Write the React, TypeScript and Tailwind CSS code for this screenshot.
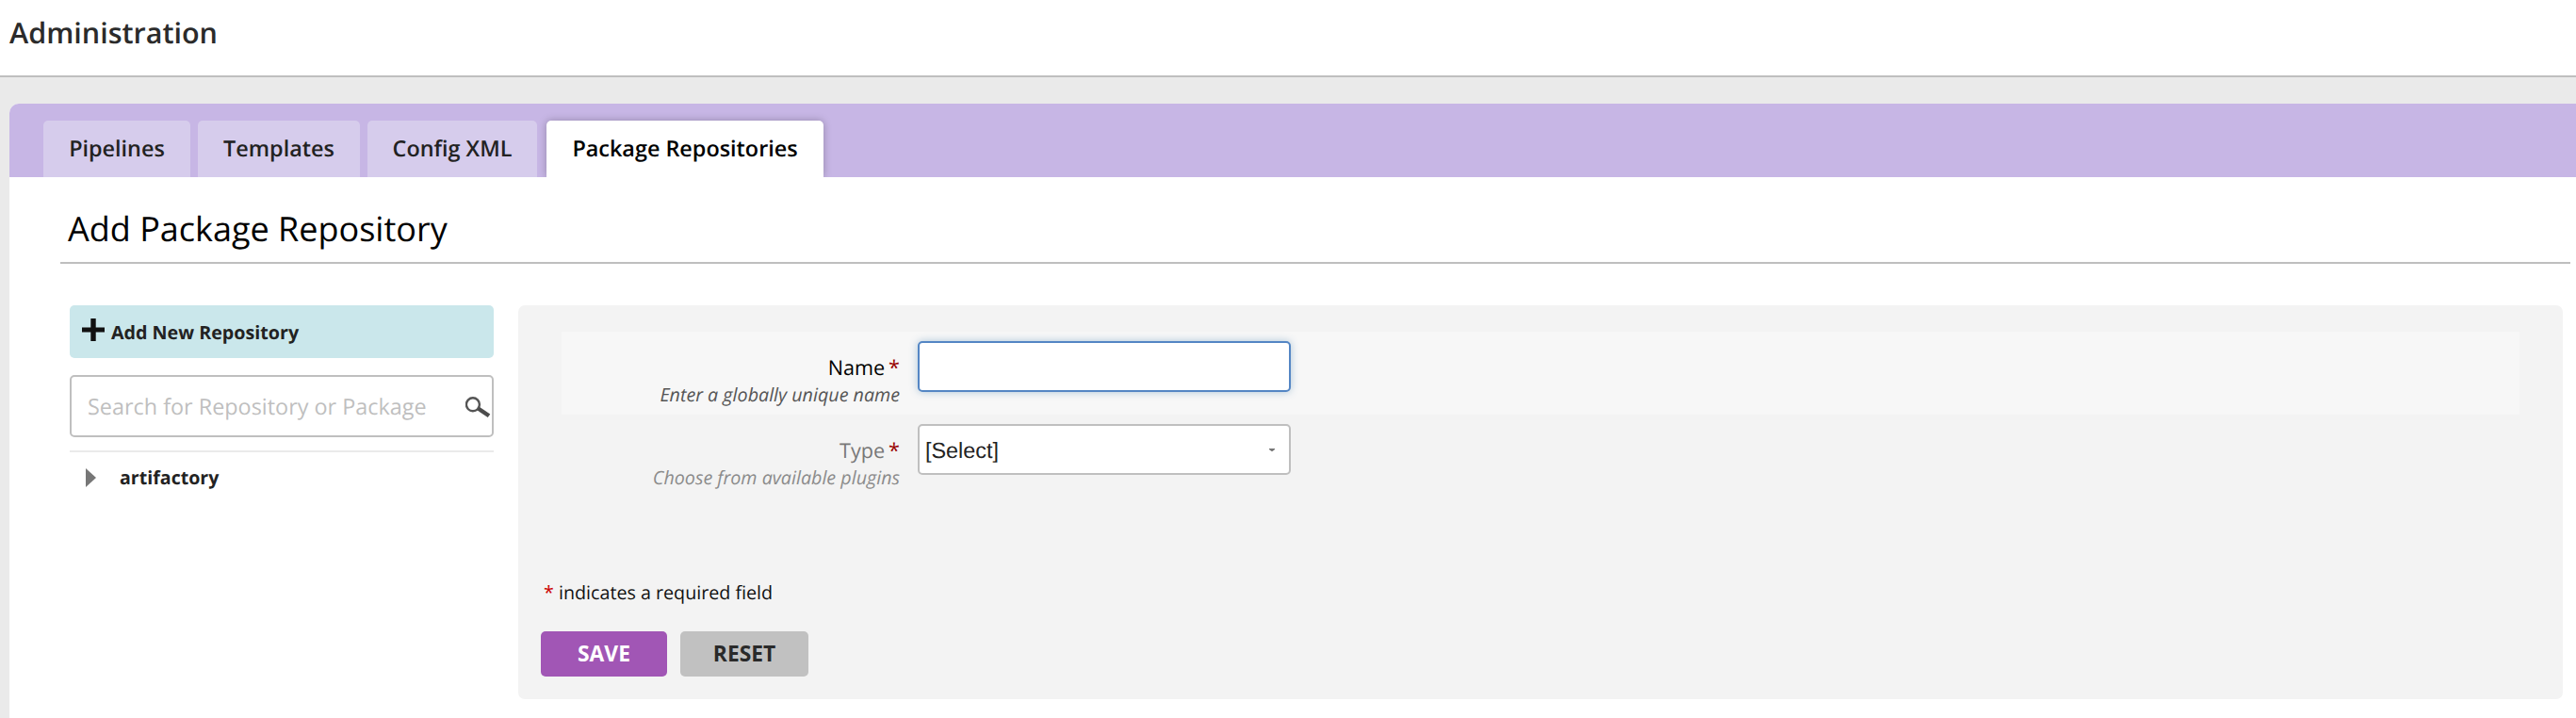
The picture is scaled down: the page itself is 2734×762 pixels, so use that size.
import type { ReactNode } from "react";

function Tab({ label, className }: { label: string; className: string }) {
  return (
    <a className={"flex h-[60px] items-start justify-center rounded-t-[5px] pt-[10px] text-[23.4px] font-semibold leading-[38px] whitespace-nowrap " + className}>
      {label}
    </a>
  );
}

function Field({ label, hint, labelClass, hintClass, rowClass, children }: {
  label: string; hint: string; labelClass: string; hintClass: string; rowClass: string; children: ReactNode;
}) {
  return (
    <div className={"flex h-[88px] pt-[10px] " + rowClass}>
      <div className="mr-[19px] w-[359px] shrink-0 pt-[14px] text-right">
        <div className={"text-[21.6px] leading-[30px] " + labelClass}>
          {label}
          <span className="ml-1 text-[#990000]">*</span>
        </div>
        <div className={"-mt-px text-[19.7px] italic leading-[28px] " + hintClass}>{hint}</div>
      </div>
      {children}
    </div>
  );
}

export default function App() {
  return (
    <div className="flex h-[762px] flex-col overflow-hidden bg-[#eaeaea] font-['Open_Sans',sans-serif] text-[#222] [text-rendering:geometricPrecision]">
      <header className="h-[82px] shrink-0 border-b-2 border-[#bfbfbf] bg-white pl-[10px]">
        <h1 className="text-[30.5px] font-semibold leading-[69px] text-[#2b2b2b]">Administration</h1>
      </header>
      <main className="mt-[28px] ml-[10px] flex grow flex-col overflow-hidden rounded-tl-[10px] bg-white">
        <nav className="flex h-[78px] shrink-0 overflow-hidden bg-[#c7b6e5] pt-[18px] pl-[36px]">
          <Tab label="Pipelines" className="mr-2 w-[156px] bg-[#d6ccec]" />
          <Tab label="Templates" className="mr-2 w-[172px] bg-[#d6ccec]" />
          <Tab label="Config XML" className="mr-[10px] w-[180px] bg-[#d6ccec]" />
          <Tab label="Package Repositories" className="w-[294px] bg-white text-black shadow-[0_0_8px_rgba(0,0,0,0.26)]" />
        </nav>
        <h2 className="mr-[6px] ml-[54px] h-[92px] shrink-0 border-b-2 border-[#bfbfbf] pt-[30px] pl-[8px] text-[36px] leading-[50px] text-black">
          Add Package Repository
        </h2>
        <div className="flex items-start pt-[44px] pr-[14px] pl-[64px]">
          <aside className="mr-[26px] w-[450px] shrink-0">
            <a className="flex h-[56px] rounded-[5px] bg-[#cae7eb] pl-[13px] text-[19.7px] font-bold leading-[58px]">
              <svg width="24" height="24" viewBox="0 0 24 24" className="mt-[14px] mr-[7px]" fill="#111">
                <path d="M9.3 0h5.4v9.6H24v4.8h-9.3V24H9.3v-9.6H0V9.6h9.3z" />
              </svg>
              Add New Repository
            </a>
            <div className="mt-[18px] flex h-[66px] items-start justify-between rounded-[5px] border-2 border-[#bfbfbf] pl-[17px]">
              <span className="text-[23.4px] leading-[63px] text-[#bfbfbf]">Search for Repository or Package</span>
              <svg width="28" height="24" viewBox="0 0 28 24" fill="none" className="mt-[21px]">
                <circle cx="7.9" cy="8.3" r="7" stroke="#555" strokeWidth="2.4" />
                <path d="M13.5 12.5L25 20.3" stroke="#4c4c4c" strokeWidth="4.4" />
              </svg>
            </div>
            <div className="mt-[14px] flex border-t-2 border-[#eaeaea] pt-[13px] pl-[17px] text-[19.6px] font-bold leading-[28px]">
              <svg width="11" height="20" viewBox="0 0 11 20" className="mt-[4px] mr-[25px]">
                <path d="M0 0L11 10L0 20z" fill="#777" />
              </svg>
              artifactory
            </div>
          </aside>
          <section className="h-[418px] grow rounded-[7px] bg-[#f3f3f3] pt-[28px] pl-[24px]">
            <div className="mr-[46px] ml-[22px]">
              <Field label="Name" hint="Enter a globally unique name" rowClass="bg-[#f7f7f7]" labelClass="text-black" hintClass="text-[#555]">
                <input className="h-[54px] w-[396px] rounded-[5px] border-2 border-[#5486c4] bg-white px-2 shadow-[0_0_8px_rgba(82,138,180,0.45)] outline-none" />
              </Field>
              <Field label="Type" hint="Choose from available plugins" rowClass="" labelClass="text-[#777]" hintClass="text-[#8b8b8b]">
                <div className="flex h-[54px] w-[396px] items-center justify-between rounded-[5px] border-2 border-[#bfbfbf] bg-white pr-[15px] pl-[6px] font-['Liberation_Sans',sans-serif] text-[23.4px]">
                  <span className="pt-[3px]">[Select]</span>
                  <svg width="6" height="4" viewBox="0 0 6 4" className="mt-px"><path d="M0 0h6v1L3.5 3h-1L0 1z" fill="#777" /></svg>
                </div>
              </Field>
            </div>
            <p className="mt-[87px] pl-[3px] text-[19.7px] leading-[28px] text-[#111]">
              <span className="text-[#cc0000]">*</span> indicates a required field
            </p>
            <div className="mt-[27px] flex gap-[14px] text-[22.8px] font-bold leading-[46px]">
              <button className="h-[48px] w-[134px] rounded-[5px] bg-[#a156b5] text-white">SAVE</button>
              <button className="h-[48px] w-[136px] rounded-[5px] bg-[#c1c1c1] text-[#2a2a2a]">RESET</button>
            </div>
          </section>
        </div>
      </main>
    </div>
  );
}
